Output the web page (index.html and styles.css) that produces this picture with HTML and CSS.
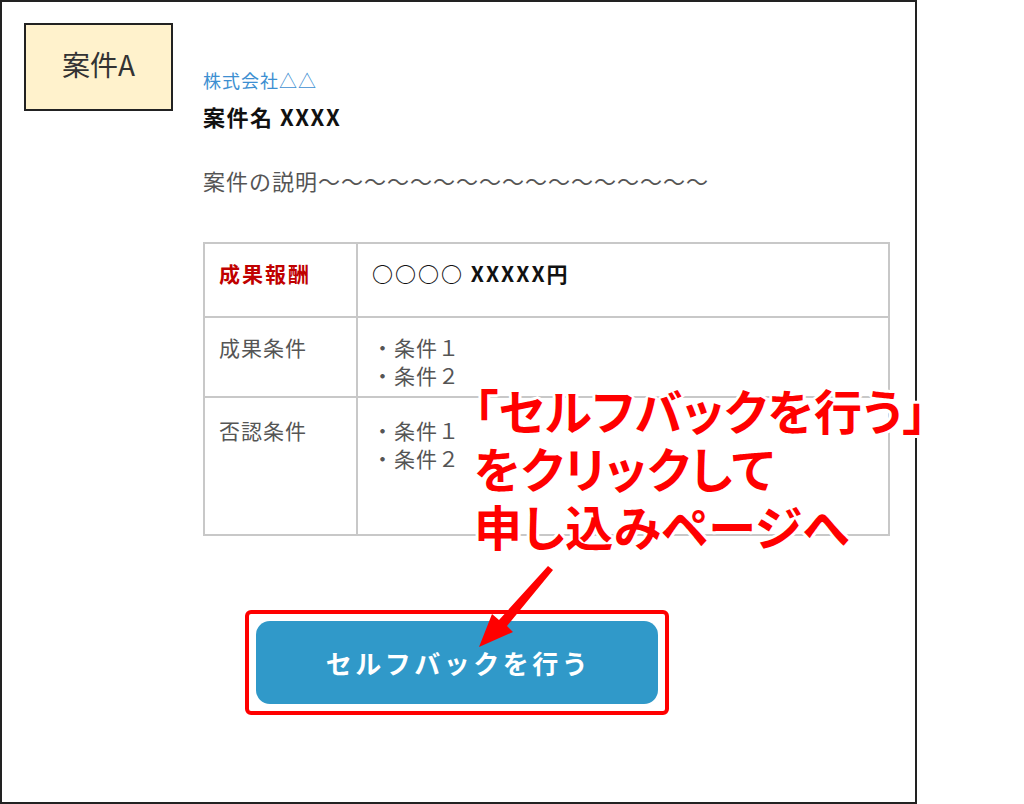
FILE: index.html
```html
<!DOCTYPE html>
<html lang="ja">
<head>
  <meta charset="UTF-8">
  <meta name="viewport" content="width=device-width, initial-scale=1.0">
  <title>案件A - セルフバック</title>
  <link rel="stylesheet" href="styles.css">
</head>
<body>
  <div class="sheet">
    <div class="top">
      <div class="label">案件A</div>
      <div class="content">
        <p class="company">株式会社△△</p>
        <h2 class="title">案件名 XXXX</h2>
        <p class="desc">案件の説明～～～～～～～～～～～～～～～～～</p>

        <table class="terms">
          <tr class="row-reward">
            <th class="reward">成果報酬</th>
            <td class="price">○○○○ XXXXX円</td>
          </tr>
          <tr class="row-cond">
            <th>成果条件</th>
            <td>
              <ul>
                <li>・条件１</li>
                <li>・条件２</li>
              </ul>
            </td>
          </tr>
          <tr class="row-deny">
            <th>否認条件</th>
            <td>
              <ul>
                <li>・条件１</li>
                <li>・条件２</li>
              </ul>
            </td>
          </tr>
        </table>
      </div>
    </div>

    <div class="actions">
      <div class="highlight">
        <button class="btn-self">セルフバックを行う</button>
      </div>
    </div>

    <!-- 注釈 -->
    <div class="note">
      「セルフバックを行う」<br>
      をクリックして<br>
      申し込みページへ
    </div>
    <svg class="arrow" width="90" height="95" viewBox="470 560 90 95">
      <polygon points="548,566 553,570 507,626 513,632 479,647 492,614 499,620" fill="#ff0000"/>
    </svg>
  </div>
</body>
</html>
```

FILE: styles.css
```css
body {
  margin: 0;
  padding: 0;
  background: #fff;
  font-family: "Noto Sans CJK JP", "Noto Sans", sans-serif;
  color: #222;
}
.sheet {
  position: relative;
  width: 917px;
  height: 804px;
  box-sizing: border-box;
  border: 2px solid #222;
}
.top {
  display: flex;
  align-items: flex-start;
  padding: 21px 0 0 22px;
}
.label {
  width: 149px;
  height: 88px;
  box-sizing: border-box;
  border: 2px solid #222;
  background: #fff2cc;
  display: flex;
  align-items: center;
  justify-content: center;
  font-size: 28px;
  color: #333;
  padding-bottom: 6px;
}
.content {
  margin-left: 30px;
  padding-top: 44px;
}
.company {
  margin: 0;
  font-size: 18px;
  line-height: 26px;
  letter-spacing: 1px;
  color: #3d8fd1;
}
.title {
  margin: 8px 0 0;
  font-size: 22px;
  line-height: 30px;
  font-weight: bold;
  letter-spacing: 1.5px;
  color: #111;
}
.desc {
  margin: 34px 0 0;
  font-size: 22px;
  line-height: 30px;
  letter-spacing: 1px;
  color: #555;
}
.terms {
  margin-top: 47px;
  width: 687px;
  border-collapse: collapse;
  border: 2px solid #c8c8c8;
}
.terms th, .terms td {
  border: 2px solid #c8c8c8;
  text-align: left;
  vertical-align: top;
  padding: 15px 14px 0;
  font-size: 21px;
  line-height: 28px;
  font-weight: normal;
  letter-spacing: 1px;
  color: #555;
}
.terms th { width: 123px; }
.terms .reward { color: #c00000; font-weight: bold; letter-spacing: 2px; }
.terms .price { color: #111; font-weight: bold; letter-spacing: 2px; }
.row-reward { height: 74px; }
.row-cond { height: 80px; }
.row-deny { height: 138px; }
.row-deny th, .row-deny td { padding-top: 18px; }
.terms ul {
  list-style: none;
  margin: 0;
  padding: 0;
}
.actions {
  display: flex;
  justify-content: center;
  margin-top: 74px;
  padding-right: 4px;
}
.highlight {
  border: 4px solid #ff0000;
  border-radius: 6px;
  padding: 7px;
}
.btn-self {
  display: block;
  width: 402px;
  height: 83px;
  border: none;
  border-radius: 14px;
  background: #3099c9;
  color: #fff;
  font-family: "Noto Sans CJK JP", sans-serif;
  font-size: 26px;
  font-weight: bold;
  letter-spacing: 3.5px;
  padding: 0 0 0 4px;
}
.note {
  position: absolute;
  left: 472px;
  top: 378px;
  font-size: 48px;
  line-height: 58px;
  font-weight: bold;
  letter-spacing: 0.5px;
  font-feature-settings: "palt";
  color: #ff0000;
  white-space: nowrap;
  text-shadow:
    3px 0 0 #fff, -3px 0 0 #fff, 0 3px 0 #fff, 0 -3px 0 #fff,
    2px 2px 0 #fff, -2px 2px 0 #fff, 2px -2px 0 #fff, -2px -2px 0 #fff;
}
.arrow {
  position: absolute;
  left: 468px;
  top: 558px;
}
```
